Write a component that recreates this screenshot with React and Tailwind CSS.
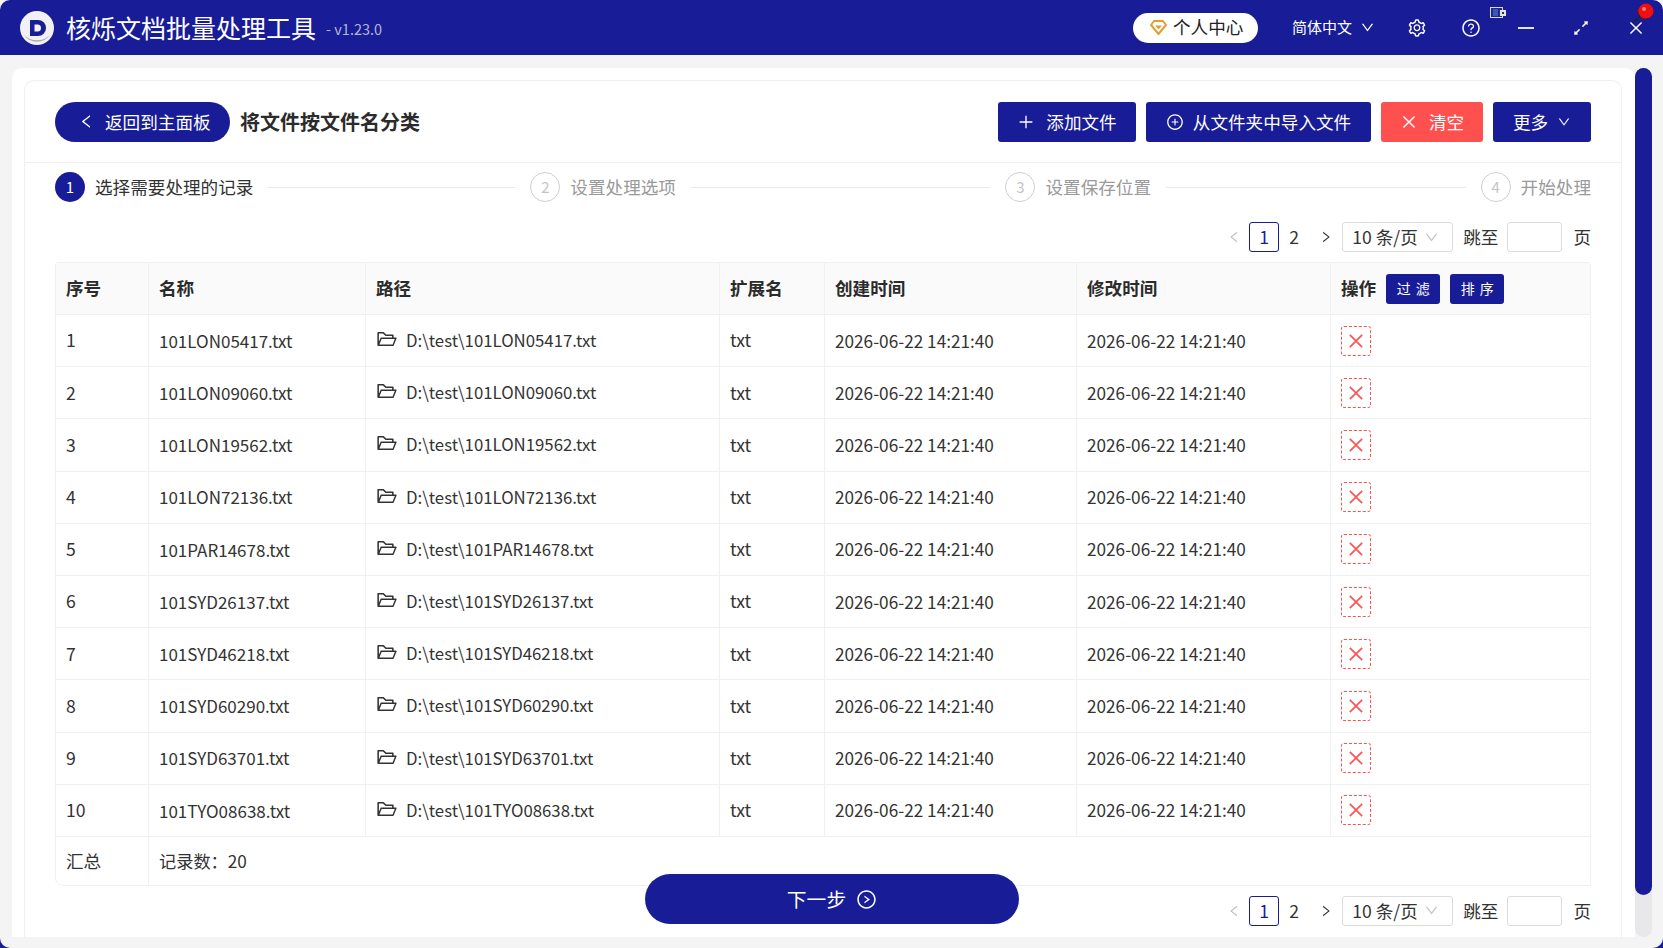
import {
  AiOutlineArrowsAlt,
  AiOutlineClose,
  AiOutlineDown,
  AiOutlineFolderOpen,
  AiOutlineLeft,
  AiOutlinePlus,
  AiOutlinePlusCircle,
  AiOutlineQuestionCircle,
  AiOutlineRight,
  AiOutlineRightCircle,
  AiOutlineSetting,
} from "react-icons/ai";

const files = [
  "101LON05417.txt",
  "101LON09060.txt",
  "101LON19562.txt",
  "101LON72136.txt",
  "101PAR14678.txt",
  "101SYD26137.txt",
  "101SYD46218.txt",
  "101SYD60290.txt",
  "101SYD63701.txt",
  "101TYO08638.txt",
];
const cols = "grid grid-cols-[93px_217px_354px_105px_252px_254px_259px]";
const cell = "flex items-center pl-[10px] border-r border-[#f0f0f0] last:border-r-0";

// logo in the title bar
const Logo = () => (
  <svg width="34" height="34" viewBox="0 0 34 34">
    <circle cx="17" cy="17" r="17" fill="#f1f1f3" />
    <path d="M4 24a16 16 0 0 0 26 0a17 15 0 0 1-26 0z" fill="#a9a9b5" />
    <path d="M10 9h8a8 8 0 0 1 0 16h-8z" fill="#181c96" />
    <path d="M14.500 13.500h3a3.500 3.500 0 0 1 0 7h-3z" fill="#f1f1f3" />
  </svg>
);

const Diamond = () => (
  <svg width="17" height="15" viewBox="0 0 17 15">
    <path d="M4 1h9l3 4-7.500 9L1 5z" fill="none" stroke="#e0a032" strokeWidth="2" strokeLinejoin="round" />
    <path d="M5 5.500h7l-3.500 4z" fill="#e0a032" />
  </svg>
);

const TrayIcon = () => (
  <svg width="16" height="11" viewBox="0 0 16 11" className="absolute left-[1490px] top-[7px]">
    <rect x="0.500" y="0.500" width="12" height="10" fill="#1c2a8c" stroke="#d8d8d8" />
    <rect x="3" y="2" width="5" height="7" fill="#3c55b8" />
    <rect x="10" y="3" width="6" height="6" fill="#e4e4e0" />
    <rect x="12" y="5" width="2" height="2" fill="#333333" />
  </svg>
);

const Pin = () => (
  <svg width="22" height="21" viewBox="0 0 22 21" className="absolute left-[1632px] top-[3px]">
    <path d="M1 20l7-7" stroke="#222222" strokeWidth="1.500" />
    <path d="M4 8l5-4 9 9-7 4z" fill="#6e1414" />
    <path d="M6 7l5-5 8 8-6 5z" fill="#c20d0d" />
    <circle cx="14" cy="8" r="7.500" fill="#f00f0f" />
    <circle cx="12" cy="6" r="2" fill="#ff7a7a" />
  </svg>
);

const TitleBar = () => (
  <div className="bg-[#f4f4f4]">
    <div className="relative flex items-center h-[55px] pl-[20px] bg-[#181c96] rounded-t-[10px] text-white">
      <Logo />
      <span className="ml-[12px] text-[25px] leading-none">核烁文档批量处理工具</span>
      <span className="ml-[10px] mt-[3px] text-[14.500px] text-[#b3b6dc]">- v1.23.0</span>
      <div className="ml-auto flex items-center gap-[6px] w-[125px] h-[30px] pl-[17px] bg-white rounded-full text-[#222222] text-[17.600px]">
        <Diamond />
        <span>个人中心</span>
      </div>
      <span className="ml-[34px] text-[15px]">简体中文</span>
      <AiOutlineDown className="ml-[8px] text-[15px]" />
      <AiOutlineSetting className="ml-[32px] text-[20px]" />
      <AiOutlineQuestionCircle className="ml-[34px] text-[20px]" />
      <span className="ml-[37px] w-[16px] h-[2px] bg-[#e4e4f2]" />
      <AiOutlineArrowsAlt className="ml-[37px] text-[20px]" />
      <AiOutlineClose className="ml-[36px] mr-[18px] text-[18px]" />
      <TrayIcon />
      <Pin />
    </div>
  </div>
);

const Step = ({ n, label, active }) => (
  <div className="flex items-center gap-[10px]">
    <span
      className={
        active
          ? "flex items-center justify-center w-[30px] h-[30px] rounded-full bg-[#181c96] text-white text-[15px]"
          : "flex items-center justify-center w-[30px] h-[30px] rounded-full border border-[#cfcfcf] text-[#c4c4c4] text-[15px]"
      }
    >
      {n}
    </span>
    <span className={active ? "text-[#333333] whitespace-nowrap" : "text-[#9a9a9a] whitespace-nowrap"}>{label}</span>
  </div>
);

const Pager = ({ className }) => (
  <div className={"flex items-center justify-end h-[30px] " + className}>
    <span className="flex justify-center w-[30px] text-[#bdbdbd] text-[14px]"><AiOutlineLeft /></span>
    <span className="flex items-center justify-center w-[30px] h-[30px] border border-[#181c96] rounded-[3px] text-[#181c96]">1</span>
    <span className="flex justify-center w-[30px]">2</span>
    <span className="flex justify-center w-[33px] text-[14px] text-[#333333]"><AiOutlineRight /></span>
    <div className="flex items-center w-[111px] h-[30px] pl-[9px] border border-[#dcdcdc] rounded-[3px] bg-white">
      <span>10 条/页</span>
      <AiOutlineDown className="ml-[6px] text-[15px] text-[#c4c4c4]" />
    </div>
    <span className="ml-[10px]">跳至</span>
    <div className="ml-[9px] w-[55px] h-[30px] border border-[#dcdcdc] rounded-[3px]" />
    <span className="ml-[11px]">页</span>
  </div>
);

const Toolbar = () => (
  <div className="flex items-center h-[82px] px-[30px] border-b border-[#efefef]">
    <button className="flex items-center w-[175px] h-[40px] pl-[23px] gap-[10px] rounded-full bg-[#181c96] text-white">
      <AiOutlineLeft className="text-[17px]" />
      <span className="pt-[1px]">返回到主面板</span>
    </button>
    <span className="ml-[10px] pt-[1px] text-[20px] font-bold text-[#2b2b2b]">将文件按文件名分类</span>
    <div className="ml-auto flex items-center gap-[10px] text-white">
      <button className="flex items-center justify-center gap-[11px] w-[138px] h-[40px] rounded-[3px] bg-[#181c96]">
        <AiOutlinePlus className="text-[18px]" />
        <span className="pt-[1px]">添加文件</span>
      </button>
      <button className="flex items-center justify-center gap-[9px] w-[225px] h-[40px] rounded-[3px] bg-[#181c96]">
        <AiOutlinePlusCircle className="text-[18px]" />
        <span className="pt-[1px]">从文件夹中导入文件</span>
      </button>
      <button className="flex items-center justify-center gap-[11px] w-[102px] h-[40px] rounded-[3px] bg-[#ff5050]">
        <AiOutlineClose className="text-[18px]" />
        <span className="pt-[1px]">清空</span>
      </button>
      <button className="flex items-center justify-center gap-[9px] w-[98px] h-[40px] rounded-[3px] bg-[#181c96]">
        <span className="pt-[1px]">更多</span>
        <AiOutlineDown className="text-[14px]" />
      </button>
    </div>
  </div>
);

const FileTable = () => (
  <div className="mt-[10px] mx-[30px] border border-[#f0f0f0] rounded-t-[3px] rounded-bl-[8px]">
    <div className={cols + " h-[52px] bg-[#fafafa] border-b border-[#f0f0f0] font-bold text-[#2b2b2b]"}>
      <div className={cell}>序号</div>
      <div className={cell}>名称</div>
      <div className={cell}>路径</div>
      <div className={cell}>扩展名</div>
      <div className={cell}>创建时间</div>
      <div className={cell}>修改时间</div>
      <div className={cell}>
        <span>操作</span>
        <button className="ml-[10px] w-[54px] h-[30px] pl-[5px] rounded-[3px] bg-[#181c96] text-white text-[14px] font-normal tracking-[5px]">过滤</button>
        <button className="ml-[10px] w-[54px] h-[30px] pl-[5px] rounded-[3px] bg-[#181c96] text-white text-[14px] font-normal tracking-[5px]">排序</button>
      </div>
    </div>
    {files.map((name, i) => (
      <div key={name} className={cols + " h-[52.200px] border-b border-[#f0f0f0]"}>
        <div className={cell}>{i + 1}</div>
        <div className={cell + " text-[17px]"}>{name}</div>
        <div className={cell}>
          <AiOutlineFolderOpen className="text-[22px] text-[#333333] mb-[3px]" />
          <span className="ml-[8px] text-[16.800px]">D:\test\{name}</span>
        </div>
        <div className={cell}>txt</div>
        <div className={cell + " text-[17.200px]"}>2026-06-22 14:21:40</div>
        <div className={cell + " text-[17.200px]"}>2026-06-22 14:21:40</div>
        <div className={cell}>
          <span className="flex items-center justify-center w-[30px] h-[30px] border border-dashed border-[#ff5050] rounded-[3px] text-[#ff5050] text-[20px]">
            <AiOutlineClose />
          </span>
        </div>
      </div>
    ))}
    <div className={cols + " h-[48px]"}>
      <div className={cell}>汇总</div>
      <div className="flex items-center pl-[10px] col-span-6 text-[17.200px]">记录数：20</div>
    </div>
  </div>
);

export default function App() {
  return (
    <div className="w-[1663px] h-[948px] overflow-hidden bg-[#181c96] font-['Noto_Sans_CJK_SC','Noto_Sans',sans-serif] text-[17.600px] text-[#333333]">
      <TitleBar />
      <div className="flex h-[893px] pl-[12px] pt-[13px] pb-[11px] bg-[#f4f4f4] rounded-b-[10px]">
        <div className="w-[1623px] pl-[12px] pr-[13px] pt-[12px] bg-white rounded-t-[10px]">
          <div className="relative h-full border border-b-0 border-[#f0f0f0] rounded-t-[10px]">
            <Toolbar />
            <div className="flex items-center gap-[15px] mt-[9px] px-[30px]">
              <Step n="1" label="选择需要处理的记录" active />
              <span className="w-[247px] h-px bg-[#e8e8e8]" />
              <Step n="2" label="设置处理选项" />
              <span className="flex-1 h-px bg-[#e8e8e8]" />
              <Step n="3" label="设置保存位置" />
              <span className="flex-1 h-px bg-[#e8e8e8]" />
              <Step n="4" label="开始处理" />
            </div>
            <Pager className="mt-[20px] px-[30px]" />
            <FileTable />
            <Pager className="mt-[10px] px-[30px]" />
            <button className="absolute left-[620px] top-[793px] flex items-center justify-center gap-[10px] w-[374px] h-[50px] rounded-full bg-[#181c96] text-white text-[19.800px]">
              <span>下一步</span>
              <AiOutlineRightCircle className="text-[21px]" />
            </button>
          </div>
        </div>
        <div className="w-[17px] bg-[#e8e8ea] rounded-[9px]">
          <div className="h-[827px] bg-[#181c96] rounded-[9px]" />
        </div>
      </div>
    </div>
  );
}
